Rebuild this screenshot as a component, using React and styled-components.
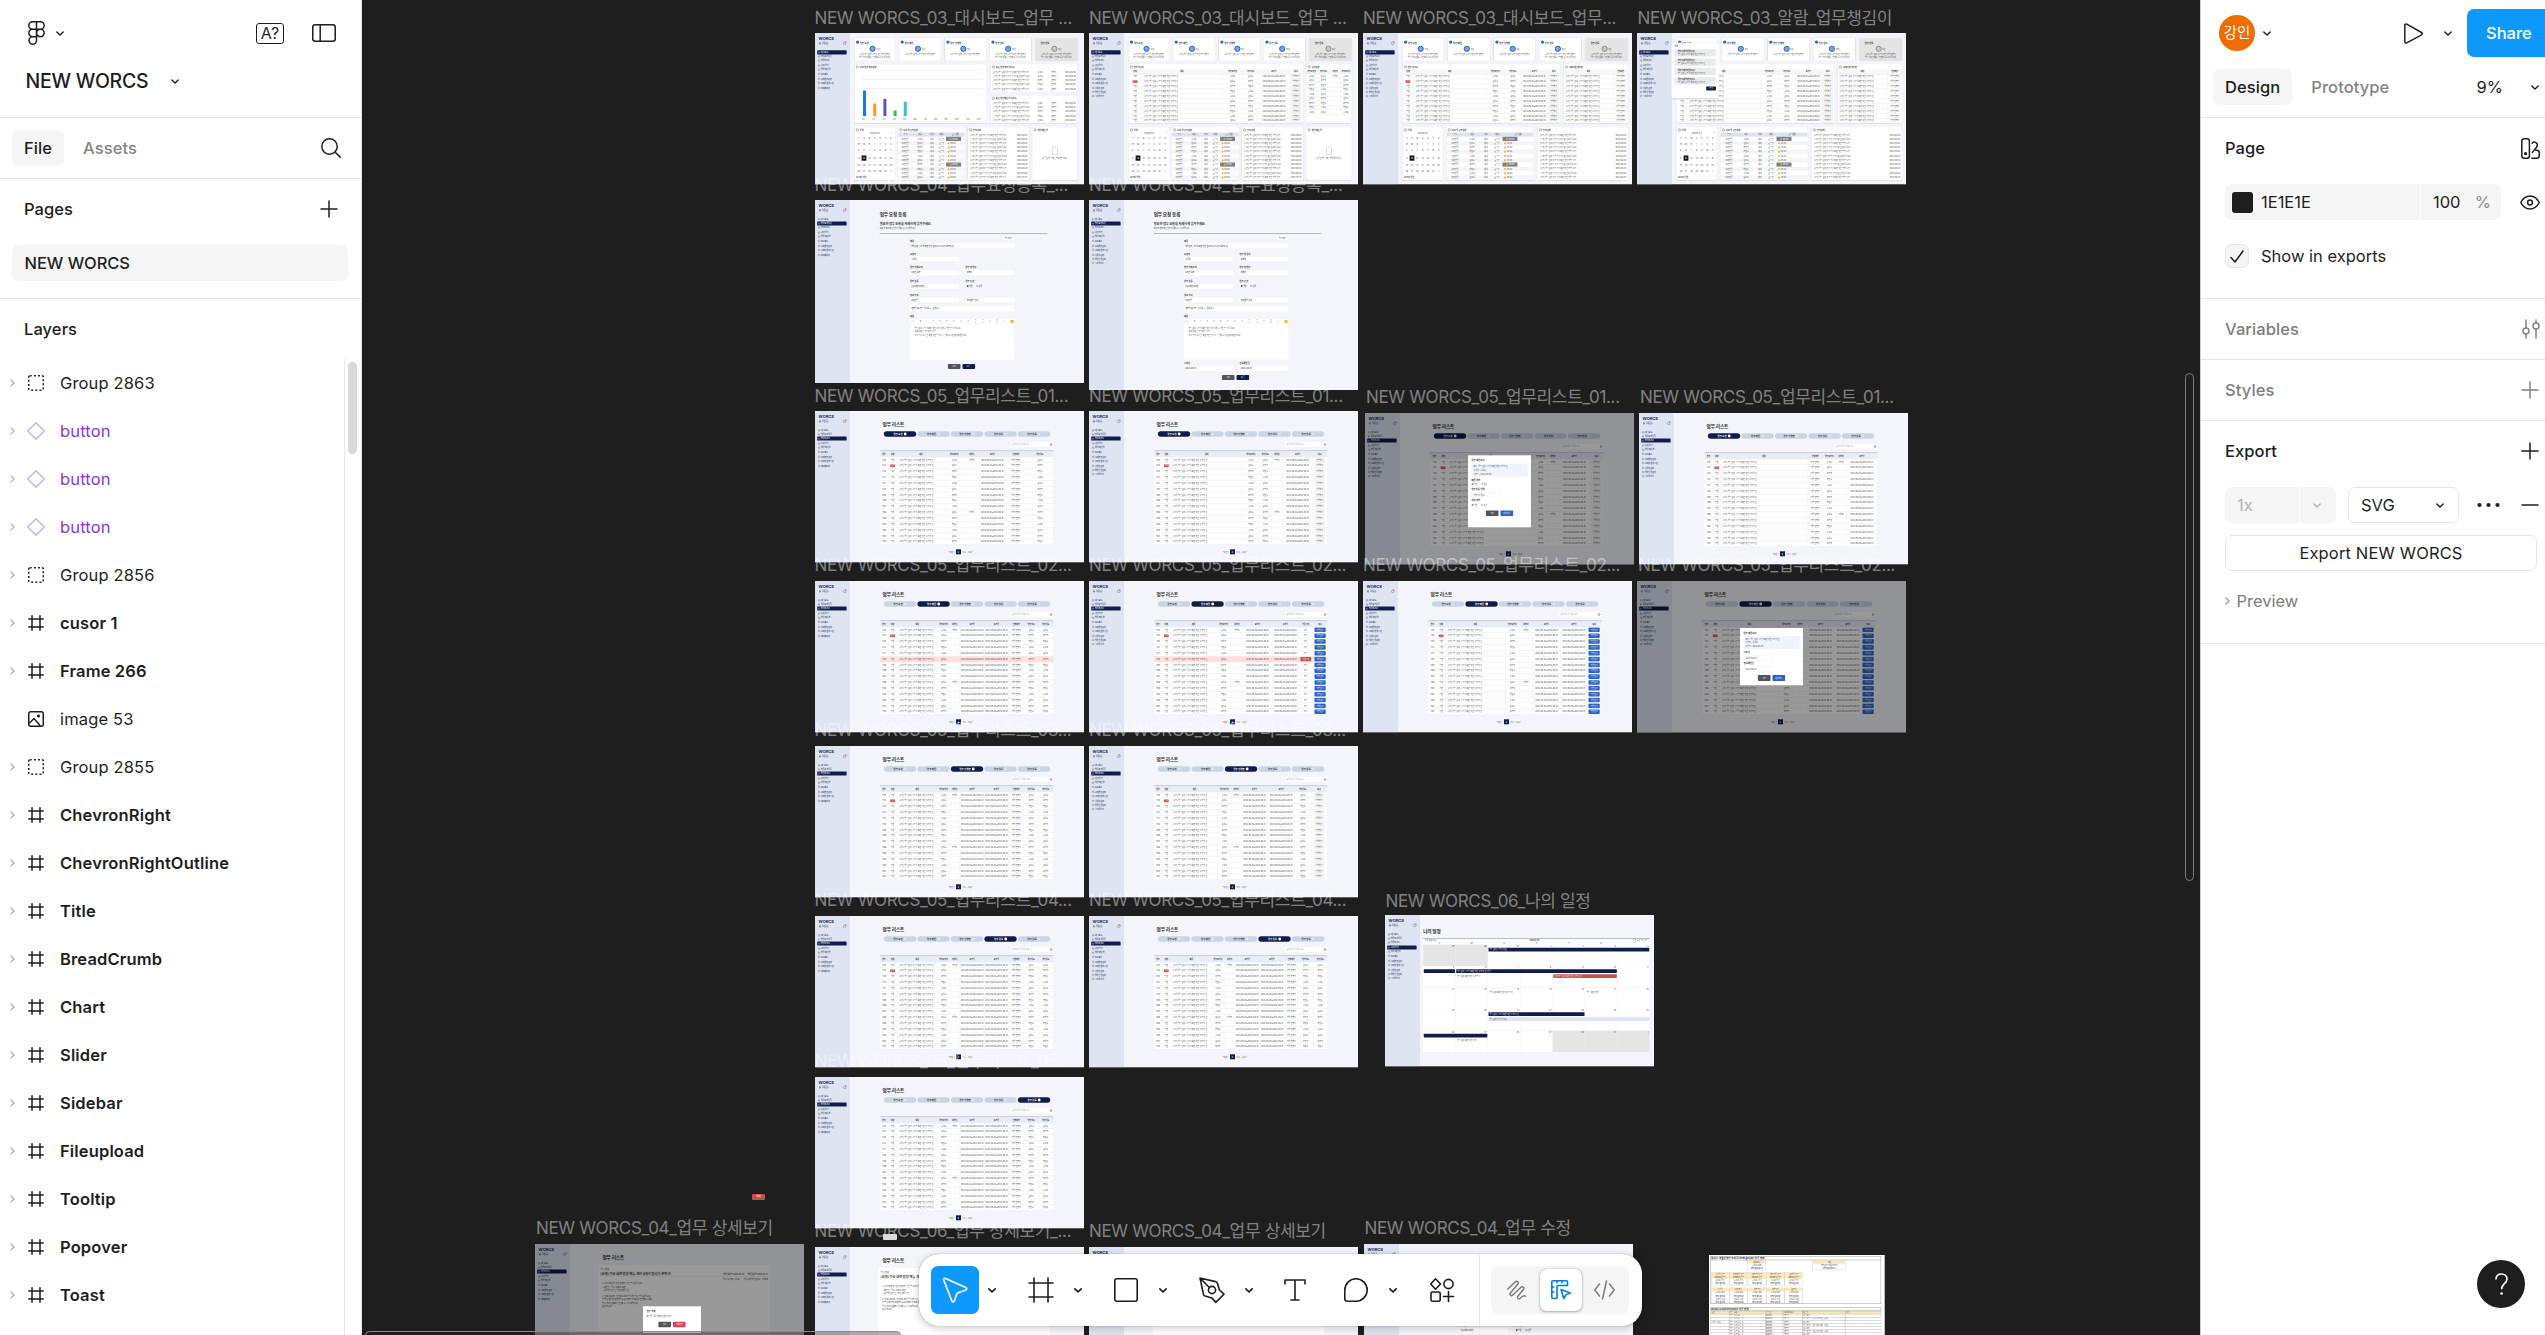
import React from "react";
import styled, { createGlobalStyle, css } from "styled-components";

const GlobalStyle = createGlobalStyle`
  *, *::before, *::after { box-sizing: border-box; }
  html, body { margin: 0; padding: 0; overflow: hidden; }
  body {
    font-family: Inter, "Noto Sans CJK KR", "Noto Sans", sans-serif;
    font-size: 16.5px;
    color: #1e1e1e;
    background: #1e1e1e;
  }
`;

const ink = "#1e1e1e";
const muted = "#838383";
const line = "#e6e6e6";
const navy = "#101c4c";
const blue = "#2a63c6";
const red = "#cf4a4a";

/* ---------------------------------------------------------------- shell */

const Shell = styled.div`
  display: grid;
  grid-template-columns: 362px 1838px 345px;
  width: 2545px;
  height: 1335px;
  overflow: hidden;
`;

const Svg = styled.svg`
  display: block;
  flex: none;
  overflow: visible;
  fill: none;
  stroke: ${(p) => p.$c || ink};
  stroke-width: ${(p) => p.$sw || 1.5};
  stroke-linecap: round;
  stroke-linejoin: round;
`;

const Icon = ({ w, h, c, sw, children, className }) => (
  <Svg className={className} width={w} height={h} viewBox={`0 0 ${w} ${h}`} $c={c} $sw={sw}>
    {children}
  </Svg>
);

const ChevronDown = ({ c, sw }) => (
  <Icon w={8} h={5} c={c} sw={sw || 1.4}><path d="M.8 .9 4 3.9 7.2 .9" /></Icon>
);
const ChevronRight = ({ c }) => (
  <Icon w={5} h={8} c={c} sw={1.4}><path d="M.9 .9 4.1 4 .9 7.1" /></Icon>
);
const Plus = ({ c, s = 16 }) => (
  <Icon w={s} h={16} c={c}><path d={`M0 8h${s}M${s / 2} 0v16`} /></Icon>
);

/* ----------------------------------------------------------- left panel */

const LeftPanel = styled.aside`
  display: flex;
  flex-direction: column;
  width: 362px;
  height: 1335px;
  background: #fff;
  border-right: 1px solid #e0e0e0;
`;

const FileHeader = styled.header`
  height: 118px;
  border-bottom: 1px solid ${line};
`;

const TopRow = styled.div`
  display: flex;
  align-items: center;
  height: 66px;
  padding: 0 25px 0 28px;
`;

const Spacer = styled.div`
  flex: 1;
`;

const Gap = styled.div`
  flex: none;
  width: ${(p) => p.$w}px;
`;

const Badge = styled.div`
  width: 28px;
  height: 21px;
  margin-right: 28px;
  border: 1.5px solid ${ink};
  border-radius: 3px;
  font-size: 16px;
  line-height: 18px;
  text-align: center;
  letter-spacing: 0.2px;
`;

const FileName = styled.div`
  display: flex;
  align-items: center;
  height: 30px;
  padding-left: 25.5px;
  gap: 22.5px;
  font-size: 19.5px;
  font-weight: 500;
  letter-spacing: -0.25px;
`;

const TabBar = styled.nav`
  display: flex;
  align-items: center;
  height: ${(p) => p.$h}px;
  padding: ${(p) => p.$pad};
  border-bottom: 1px solid ${line};
`;

const Tab = styled.div`
  height: 36px;
  padding: 0 12px;
  border-radius: 7px;
  line-height: 36px;
  font-weight: ${(p) => (p.$on ? 550 : 450)};
  letter-spacing: 0.08px;
  color: ${(p) => (p.$on ? ink : muted)};
  background: ${(p) => (p.$on ? "#f5f5f5" : "transparent")};
  margin-right: 7px;
`;

const PagesSection = styled.section`
  height: 120px;
  border-bottom: 1px solid ${line};
  padding: 0 12px;
`;

const SectionHead = styled.div`
  display: flex;
  align-items: center;
  justify-content: space-between;
  height: ${(p) => p.$h || 60}px;
  padding: ${(p) => p.$pad || "0 12px"};
  font-weight: 550;
  letter-spacing: 0.08px;
  color: ${(p) => (p.$dim ? "#7d7d7d" : ink)};
`;

const PageItem = styled.div`
  width: 336px;
  height: 36px;
  margin-top: 6px;
  padding: 0 12.5px;
  line-height: 36px;
  font-weight: 500;
  letter-spacing: -0.05px;
  border-radius: 7px;
  background: #f5f5f5;
`;

const LayersBody = styled.div`
  display: flex;
  flex: 1;
`;

const LayerList = styled.ul`
  width: 345px;
  margin: 0;
  padding: 0;
  list-style: none;
  border-right: 1px solid ${line};
`;

const ScrollThumb = styled.div`
  width: 9px;
  height: 92px;
  margin: 3px 0 0 3px;
  border-radius: 4.5px;
  background: #d9d9d9;
`;

const LayerRow = styled.li`
  display: grid;
  grid-template-columns: 17px 33.5px 1fr;
  align-items: center;
  height: 48px;
  padding-left: 9.5px;
  white-space: nowrap;
  letter-spacing: 0.15px;
  font-weight: ${(p) => (p.$kind === "frame" ? 600 : 400)};
  color: ${(p) => (p.$kind === "component" ? "#8638e5" : ink)};
`;

const layerIcons = {
  group: <Icon w={16} h={16}><rect x=".75" y=".75" width="14.5" height="14.5" strokeDasharray="2 2.1" rx="1" strokeLinecap="butt" /></Icon>,
  component: <Icon w={18} h={18} c="#c9b1ea"><path d="M9 .8 17.2 9 9 17.2.8 9z" /></Icon>,
  frame: <Icon w={16} h={16}><path d="M4 .8v14.4M12 .8v14.4M.8 4h14.4M.8 12h14.4" /></Icon>,
  image: <Icon w={16} h={16}><rect x=".75" y=".75" width="14.5" height="14.5" rx="2" /><path d="m1.5 12 4.5-4.5 6 7" /><circle cx="10.5" cy="5" r=".8" fill={ink} /></Icon>,
};

const LayerGlyph = styled.span`
  display: flex;
  justify-content: center;
  width: 18px;
`;

const layers = [
  ["group", "Group 2863"], ["component", "button"], ["component", "button"], ["component", "button"],
  ["group", "Group 2856"], ["frame", "cusor 1"], ["frame", "Frame 266"], ["image", "image 53"],
  ["group", "Group 2855"], ["frame", "ChevronRight"], ["frame", "ChevronRightOutline"], ["frame", "Title"],
  ["frame", "BreadCrumb"], ["frame", "Chart"], ["frame", "Slider"], ["frame", "Sidebar"],
  ["frame", "Fileupload"], ["frame", "Tooltip"], ["frame", "Popover"], ["frame", "Toast"],
];

const FigmaLogo = () => (
  <Icon w={17} h={24}>
    <path d="M8.5.75H4.6a3.75 3.75 0 0 0 0 7.5h3.9zM8.5.75h3.9a3.75 3.75 0 0 1 0 7.5H8.5zM8.5 8.25H4.6a3.75 3.75 0 0 0 0 7.5h3.9zM12.4 8.25a3.75 3.75 0 1 1 0 7.5 3.75 3.75 0 0 1 0-7.5zM8.5 15.75H4.6a3.75 3.75 0 1 0 3.9 3.75zM8.5 8.25v7.5" />
  </Icon>
);

const Left = () => (
  <LeftPanel>
    <FileHeader>
      <TopRow>
        <FigmaLogo />
        <Gap $w={11} />
        <ChevronDown />
        <Spacer />
        <Badge>A?</Badge>
        <Icon w={24} h={18}><rect x=".75" y=".75" width="22.5" height="16.5" rx="2.5" /><path d="M8.2 1v16" /></Icon>
      </TopRow>
      <FileName>NEW WORCS<ChevronDown /></FileName>
    </FileHeader>
    <TabBar $h={61} $pad="0 20px 0 12px">
      <Tab $on>File</Tab>
      <Tab>Assets</Tab>
      <Spacer />
      <Icon w={20} h={20}><circle cx="8.5" cy="8.5" r="7.7" /><path d="m14 14 5.3 5.3" /></Icon>
    </TabBar>
    <PagesSection>
      <SectionHead>Pages<Plus /></SectionHead>
      <PageItem>NEW WORCS</PageItem>
    </PagesSection>
    <SectionHead $pad="0 24px">Layers</SectionHead>
    <LayersBody>
      <LayerList>
        {layers.map(([kind, name], i) => (
          <LayerRow key={i} $kind={kind}>
            <span>{kind !== "image" && <ChevronRight c={kind === "component" ? "#c9b1ea" : "#b3b3b3"} />}</span>
            <LayerGlyph>{layerIcons[kind]}</LayerGlyph>
            <span>{name}</span>
          </LayerRow>
        ))}
      </LayerList>
      <ScrollThumb />
    </LayersBody>
  </LeftPanel>
);

/* ---------------------------------------------------------- right panel */

const RightPanel = styled.aside`
  position: relative;
  width: 345px;
  height: 1335px;
  overflow: hidden;
  background: #fff;
  border-left: 1px solid #d0d0d0;
`;

const UserRow = styled.div`
  display: flex;
  align-items: center;
  height: 66px;
  padding-left: 18px;
`;

const Avatar = styled.div`
  flex: none;
  width: 36px;
  height: 36px;
  margin-right: 8px;
  border-radius: 50%;
  background: #ef6c00;
  color: #fff;
  font-size: 14.5px;
  line-height: 35px;
  text-align: center;
  white-space: nowrap;
`;

const ShareButton = styled.div`
  flex: none;
  width: 90px;
  height: 48px;
  margin-left: 15px;
  padding-left: 19px;
  border-radius: 7px;
  background: #0d99ff;
  color: #fff;
  font-weight: 550;
  line-height: 48px;
`;

const RSection = styled.section`
  height: ${(p) => p.$h}px;
  border-bottom: 1px solid ${line};
`;

const RHead = styled(SectionHead)`
  padding: 0 ${(p) => p.$pr || 6}px 0 24px;
`;

const Line = styled.div`
  display: flex;
  align-items: center;
  height: ${(p) => p.$h || 36}px;
  margin-top: ${(p) => p.$mt || 0}px;
  padding-left: 24px;
`;

const ColorField = styled.div`
  display: flex;
  align-items: center;
  width: 195px;
  height: 36px;
  padding-left: 7px;
  border-radius: 7px 0 0 7px;
  background: #f5f5f5;
  gap: 8px;
`;

const Swatch = styled.div`
  width: 21px;
  height: 21px;
  border-radius: 3px;
  background: ${ink};
`;

const AlphaField = styled.div`
  display: flex;
  justify-content: space-between;
  width: 80px;
  height: 36px;
  margin: 0 19px 0 1px;
  padding: 0 10px 0 12px;
  line-height: 36px;
  border-radius: 0 7px 7px 0;
  background: #f5f5f5;
`;

const Dim = styled.span`
  color: ${(p) => p.$c || "#8c8c8c"};
`;

const Check = styled.div`
  display: flex;
  align-items: center;
  justify-content: center;
  width: 24px;
  height: 24px;
  margin-right: 12px;
  border: 1px solid ${line};
  border-radius: 7px;
  background: #f5f5f5;
`;

const ScaleField = styled.div`
  display: flex;
  align-items: center;
  width: ${(p) => p.$w}px;
  height: 36px;
  padding-left: ${(p) => p.$pl}px;
  margin-right: ${(p) => p.$mr}px;
  border-radius: ${(p) => (p.$end ? "0 7px 7px 0" : "7px 0 0 7px")};
  background: #f5f5f5;
  color: #b3b3b3;
`;

const SelectBox = styled.div`
  display: flex;
  align-items: center;
  justify-content: space-between;
  width: 111px;
  height: 36px;
  padding: 0 14px 0 12px;
  border: 1px solid ${line};
  border-radius: 7px;
  margin-right: 18px;
`;

const WideButton = styled.div`
  width: 312px;
  height: 36px;
  border: 1px solid ${line};
  border-radius: 7px;
  line-height: 35px;
  text-align: center;
  font-weight: 400;
  letter-spacing: 0.15px;
`;

const HelpButton = styled.div`
  position: absolute;
  left: 276px;
  top: 1260px;
  display: flex;
  align-items: center;
  justify-content: center;
  width: 48px;
  height: 48px;
  border-radius: 50%;
  background: ${ink};
`;

const Right = () => (
  <RightPanel>
    <UserRow>
      <Avatar>강인</Avatar>
      <ChevronDown />
      <Gap $w={133} />
      <Icon w={19} h={21}><path d="M.8 2.2v16.6c0 1.1 1 1.6 1.9 1.1l14.9-8c.9-.5.9-1.9 0-2.4L2.700 1.200C1.800.7.8 1.200.8 2.200z" /></Icon>
      <Gap $w={21} />
      <ChevronDown />
      <ShareButton>Share</ShareButton>
    </UserRow>
    <TabBar $h={52} $pad="0 6px 9px 12px">
      <Tab $on>Design</Tab>
      <Tab>Prototype</Tab>
      <Spacer />
      <span>9%</span>
      <Gap $w={28} />
      <ChevronDown />
    </TabBar>
    <RSection $h={181}>
      <RHead $pr={5}>Page
        <Icon w={19} h={21}>
          <rect x=".8" y=".8" width="7.6" height="19.4" rx="2.5" />
          <circle cx="4.6" cy="15.6" r=".9" fill={ink} />
          <path d="M11.2 5.2c1.5-1.8 4.2-1.2 5 .6.6 1.500-.2 3-1.600 4.600l-3.200 4M14.800 12.200h1c1.600 0 2.500 1.200 2.500 2.600v2.800c0 1.600-1 2.600-2.500 2.600h-5" />
        </Icon>
      </RHead>
      <Line $mt={6}>
        <ColorField><Swatch />1E1E1E</ColorField>
        <AlphaField>100<Dim>%</Dim></AlphaField>
        <Icon w={20} h={15}><path d="M.8 7.500C3 3.200 6.200 1 10 1s7 2.200 9.200 6.500C17 11.800 13.800 14 10 14S3 11.800.8 7.500z" /><circle cx="10" cy="7.500" r="2.400" /></Icon>
      </Line>
      <Line $mt={18}>
        <Check><Icon w={14} h={13}><path d="m1 7.500 4 4.500L13 1" /></Icon></Check>
        Show in exports
      </Line>
    </RSection>
    <RSection $h={61}>
      <RHead $dim>Variables
        <Icon w={17} h={18} c={muted}><path d="M4 0v8M4 14v4M14 0v3M14 9v9" /><circle cx="4" cy="11" r="3" /><circle cx="14" cy="6" r="3" /></Icon>
      </RHead>
    </RSection>
    <RSection $h={61}>
      <RHead $dim $pr={7}>Styles<Plus c={muted} /></RHead>
    </RSection>
    <RSection $h={223}>
      <RHead $pr={7}>Export<Plus /></RHead>
      <Line $mt={6}>
        <ScaleField $w={74} $pl={12} $mr={1}>1x</ScaleField>
        <ScaleField $w={36} $pl={13} $mr={12} $end><ChevronDown c="#b3b3b3" /></ScaleField>
        <SelectBox>SVG<ChevronDown /></SelectBox>
        <Icon w={24} h={6}><g fill={ink} stroke="none"><circle cx="2.500" cy="3" r="2.100" /><circle cx="11.500" cy="3" r="2.100" /><circle cx="20.500" cy="3" r="2.100" /></g></Icon>
        <Gap $w={21} />
        <Icon w={16} h={2}><path d="M0 1h16" /></Icon>
      </Line>
      <Line $mt={12}><WideButton>Export NEW WORCS</WideButton></Line>
      <Line $mt={12}><ChevronRight c="#a0a0a0" /><Gap $w={6.500} /><Dim $c="#7d7d7d">Preview</Dim></Line>
    </RSection>
    <HelpButton>
      <Icon w={13} h={22} c="#fff" sw={1.7}><path d="M1 5.800C1.200 2.800 3.400 1 6.500 1S12 3 12 5.900c0 4.600-5.300 4.700-5.300 9.600" /><circle cx="6.600" cy="20.500" r=".5" fill="#fff" /></Icon>
    </HelpButton>
  </RightPanel>
);

/* --------------------------------------------------------------- canvas */

const Canvas = styled.main`
  position: relative;
  overflow: hidden;
  background: ${ink};
`;

const NodeLabel = styled.div`
  position: absolute;
  z-index: 2;
  left: ${(p) => p.$x - 362}px;
  top: ${(p) => p.$y - 17}px;
  height: 22px;
  line-height: 22px;
  font-size: 17px;
  letter-spacing: -0.34px;
  white-space: nowrap;
  color: rgba(255, 255, 255, 0.45);
`;

/* Artboards are laid out ten times larger than they appear at this zoom. */
const Board = styled.article`
  position: absolute;
  z-index: 1;
  left: ${(p) => p.$x - 362}px;
  top: ${(p) => p.$y}px;
  display: flex;
  width: 2690px;
  height: ${(p) => p.$h || 1513}px;
  overflow: hidden;
  transform: scale(0.1);
  transform-origin: 0 0;
  background: #f4f5fa;
  color: #333;
  font-size: 19px;
  line-height: 1;
  white-space: nowrap;
`;

const Dimmer = styled.div`
  position: absolute;
  inset: 0;
  background: rgba(0, 0, 0, 0.4);
`;

const Side = styled.div`
  flex: none;
  width: 350px;
  padding: 34px 22px;
  background: #dfe4f2;
  color: #2b3763;
`;

const Brand = styled.div`
  padding-left: 14px;
  font-size: 41px;
  font-weight: 700;
  letter-spacing: -1px;
  color: #1f2b58;
`;

const Who = styled.div`
  display: flex;
  justify-content: space-between;
  align-items: center;
  height: 58px;
  margin-bottom: 40px;
  padding: 0 18px 0 16px;
  font-size: 24px;
  font-weight: 500;
`;

const Bell = styled.i`
  width: 28px;
  height: 28px;
  border: 5px solid #6d7aa5;
  border-radius: 10px;
  box-shadow: 9px -10px 0 -5px #f04a55;
`;

const MenuGroup = styled.div`
  margin-bottom: 9px;
`;

const MenuItem = styled.div`
  display: flex;
  align-items: center;
  height: 41px;
  width: 294px;
  padding-left: 10px;
  gap: 9px;
  font-size: 20px;
  font-weight: 500;
  ${(p) => p.$on && css`background: ${navy}; color: #fff; border-radius: 6px;`}
`;

const MenuDot = styled.i`
  width: 18px;
  height: 18px;
  border: 4px solid currentColor;
  border-radius: 4px;
  opacity: 0.7;
`;

const userMenu = [["대시보드", "업무요청등록", "업무리스트"], ["나의 일정", "업무 매뉴얼", "프로젝트"], ["고객센터관리", "고객지원게시판"], ["마이페이지"]];
const adminMenu = [["대시보드", "업무요청등록", "업무리스트"], ["나의 일정", "업무 매뉴얼", "프로젝트"], ["고객센터관리", "고객지원게시판"], ["사용자관리", "업무분류관리", "시스템설정"]];

const SideNav = ({ active, admin }) => (
  <Side>
    <Brand>WORCS</Brand>
    <Who><span>홍 길동님</span><Bell /></Who>
    {(admin ? adminMenu : userMenu).map((g, i) => (
      <MenuGroup key={i}>
        {g.map((t) => <MenuItem key={t} $on={t === active}><MenuDot />{t}</MenuItem>)}
      </MenuGroup>
    ))}
  </Side>
);

const BTitle = styled.h2`
  margin: 0;
  padding-left: ${(p) => p.$pl || 0}px;
  font-size: 47px;
  line-height: 60px;
  font-weight: 700;
  letter-spacing: -2px;
  color: #2b2b2b;
`;

const Button = styled.span`
  display: inline-flex;
  align-items: center;
  justify-content: center;
  width: ${(p) => p.$w || 126}px;
  height: ${(p) => p.$h || 50}px;
  margin-left: ${(p) => (p.$end ? "auto" : 0)};
  border-radius: 8px;
  background: ${(p) => p.$bg};
  color: ${(p) => p.$c || "#fff"};
  border: ${(p) => p.$bd || "0"};
  font-size: 19px;
`;

/* task list */

const ListPage = styled.div`
  width: 1730px;
  margin-left: 303px;
  padding-top: 100px;
`;

const Pills = styled.div`
  display: flex;
  gap: 12px;
  margin: 42px 0 54px 36px;
`;

const Pill = styled.div`
  display: flex;
  align-items: center;
  justify-content: center;
  gap: 12px;
  width: 323px;
  height: 55px;
  border-radius: 28px;
  background: ${(p) => (p.$on ? navy : "#c9d5e4")};
  color: ${(p) => (p.$on ? "#fff" : "#333")};
  font-size: 23px;
  font-weight: 600;
  i { width: 28px; height: 28px; border-radius: 14px; background: ${(p) => (p.$on ? "#fff" : "#dde5ee")}; }
`;

const Search = styled.div`
  display: flex;
  align-items: center;
  justify-content: space-between;
  width: 420px;
  height: 47px;
  margin: 0 0 38px auto;
  padding: 0 10px;
  background: #fff;
  color: #9aa;
  i { width: 24px; height: 24px; border: 5px solid #555; border-radius: 12px; }
`;

const Table = styled.div`
  border-top: ${(p) => (p.$plain ? "0" : "7px solid #8a94b3")};
  background: #fff;
`;

const TRow = styled.div`
  display: grid;
  grid-template-columns: ${(p) => p.$cols};
  height: ${(p) => p.$h || 58.5}px;
  border-bottom: 5px solid #e9ebf0;
  background: ${(p) => p.$bg || "transparent"};
  font-weight: ${(p) => (p.$head ? 600 : 400)};
`;

const TCell = styled.div`
  display: flex;
  align-items: center;
  justify-content: ${(p) => (p.$left ? "flex-start" : "center")};
  padding-left: ${(p) => (p.$left ? 18 : 0)}px;
  border-right: 4px solid #eceef3;
  overflow: hidden;
`;

const Pager = styled.div`
  display: flex;
  align-items: center;
  gap: 16px;
  margin: 44px 0 0 680px;
  color: #444;
  b { display: grid; place-items: center; width: 50px; height: 50px; background: ${navy}; color: #fff; }
`;

const names = ["홍길동", "김철수", "이영희", "박민수"];

const cellText = {
  no: (i) => `${115 - i}`.padStart(4, "1"),
  st: (i) => (i === 1 ? <Button $bg={red} $w={48} $h={30}>긴급</Button> : "일반"),
  title: () => "[요청] 업무관리 시스템 화면 개선 요청의 건",
  who: (i) => names[i % 4],
  wk: (i) => (i % 9 === 0 ? "작업자" : "-"),
  date: () => "2024-05-01~2024-05-31",
  prog: () => "작업 진행중",
  chk: (i) => names[(i + 1) % 4],
  line: () => <Button $bg="#fff" $bd="3px solid #ccc" $c="#333" $w={100} $h={38}>작업하기</Button>,
  late: (i) => (i === 5 ? <Button $bg={red} $w={108} $h={44}>기한초과</Button> : <Button $bg="#fff" $bd="3px solid #eee" $c="#333" $w={104} $h={38}>5일</Button>),
  blue: () => <Button $bg={blue} $w={112} $h={46}>작업완료</Button>,
};
const headText = { no: "번호", st: "상태", title: "제목", who: "업무요청자", wk: "작업자", date: "요청일", prog: "진행여부", chk: "업무검토", line: "비고", late: "남은기한", blue: "비고" };

const sets = {
  u1: [["no", 80], ["st", 90], ["title", 480], ["who", 183], ["wk", 163], ["date", 251], ["prog", 223], ["chk", 260]],
  a1: [["no", 76], ["st", 91], ["title", 716], ["who", 164], ["chk", 123], ["wk", 110], ["date", 300], ["line", 145]],
  m1: [["no", 90], ["st", 80], ["title", 865], ["who", 135], ["wk", 110], ["date", 316], ["line", 130]],
  b1: [["no", 90], ["st", 74], ["title", 866], ["prog", 156], ["who", 128], ["wk", 106], ["date", 305]],
  u2: [["no", 80], ["st", 90], ["title", 404], ["who", 120], ["wk", 102], ["date", 244], ["date", 243], ["prog", 153], ["chk", 144], ["chk", 147]],
  a2: [["no", 76], ["st", 91], ["title", 451], ["who", 149], ["wk", 116], ["date", 295], ["date", 262], ["late", 145], ["blue", 140]],
  b2: [["no", 86], ["st", 89], ["title", 595], ["who", 140], ["wk", 130], ["date", 280], ["date", 266], ["blue", 139]],
  a3: [["no", 76], ["st", 91], ["title", 469], ["who", 131], ["wk", 103], ["date", 260], ["date", 270], ["chk", 164], ["line", 160]],
  a4: [["no", 76], ["st", 91], ["title", 407], ["who", 124], ["wk", 109], ["date", 240], ["date", 258], ["prog", 129], ["chk", 154], ["chk", 138]],
};

const Grid = ({ set, pink, calm, rows = 15, plain, h }) => {
  const cols = sets[set] || set;
  const t = cols.map((c) => `${c[1]}fr`).join(" ");
  return (
    <Table $plain={plain}>
      <TRow $cols={t} $bg={plain ? "#f6f7fa" : "#e9edf6"} $head $h={h}>
        {cols.map((c, j) => <TCell key={j}>{headText[c[0]]}</TCell>)}
      </TRow>
      {Array.from({ length: rows }, (_, i) => (
        <TRow key={i} $cols={t} $h={h} $bg={pink && i === 5 ? "#ffdede" : "transparent"}>
          {cols.map((c, j) => <TCell key={j} $left={c[0] === "title"}>{cellText[c[0]](calm && c[0] === "st" ? 0 : i)}</TCell>)}
        </TRow>
      ))}
    </Table>
  );
};

const Dialog = styled.div`
  position: absolute;
  left: ${(p) => p.$x}px;
  top: ${(p) => p.$y}px;
  display: flex;
  flex-direction: column;
  gap: ${(p) => p.$gap || 28}px;
  width: ${(p) => p.$w}px;
  height: ${(p) => p.$h}px;
  padding: 38px 34px;
  background: #fff;
  b { font-size: 23px; }
`;

const InfoBox = styled.div`
  display: flex;
  flex-direction: column;
  justify-content: space-around;
  height: 130px;
  padding: 10px 22px;
  background: #eff4fc;
`;

const MiniInput = styled.div`
  display: flex;
  align-items: center;
  width: ${(p) => p.$w || 280}px;
  height: 48px;
  padding-left: 20px;
  background: #fff;
  border: 3px solid #e5e7ec;
`;

const Buttons = styled.div`
  display: flex;
  justify-content: center;
  gap: 20px;
  margin-top: ${(p) => p.$mt || 0}px;
`;

const tabNames = ["업무 요청", "업무 배정", "업무 진행중", "업무 검토", "업무 완료"];

const ListBoard = ({ x, y, set, tab, admin, pink, calm, modal }) => (
  <Board $x={x} $y={y}>
    <SideNav active="업무리스트" admin={admin} />
    <ListPage>
      <BTitle $pl={23}>업무 리스트</BTitle>
      <Pills>{tabNames.map((t, i) => <Pill key={t} $on={i === tab}>{t}<i /></Pill>)}</Pills>
      <Search>검색어를 입력해주세요.<i /></Search>
      <Grid set={set} pink={pink} calm={calm} />
      <Pager>&lt;이전 1 <b>2</b> 3 4 … 다음&gt;</Pager>
    </ListPage>
    {modal && <Dimmer />}
    {modal === "review" && (
      <Dialog $x={1030} $y={423} $w={630} $h={720} $gap={23}>
        <b>업무 배정하기</b>
        <InfoBox><span>제목 : 업무관리 시스템 화면 개선 요청의 건</span><span>요청자 : 홍길동</span><span>요청일 : 2024-05-01</span></InfoBox>
        <b>배정 여부</b><span>◉ 승인　　○ 반려</span>
        <b>업무분류 선택</b><MiniInput>개발요청 접수</MiniInput>
        <b>처리 여부</b><span>◉ 일반　　○ 긴급</span>
        <Buttons $mt={22}><Button $bg="#51545c" $h={56}>취소</Button><Button $bg={blue} $h={56}>배정하기</Button></Buttons>
      </Dialog>
    )}
    {modal === "assign" && (
      <Dialog $x={1030} $y={470} $w={630} $h={573} $gap={20}>
        <b>업무 배정하기</b>
        <InfoBox><span>제목 : 업무관리 시스템 화면 개선 요청의 건</span><span>요청자 : 홍길동</span><span>요청일 : 2024-05-01</span></InfoBox>
        <b>시작일</b><MiniInput>2024-05-01</MiniInput>
        <b>종료예정일</b><MiniInput>2024-05-31</MiniInput>
        <Buttons $mt={18}><Button $bg="#51545c" $h={60}>취소</Button><Button $bg={blue} $h={60}>배정하기</Button></Buttons>
      </Dialog>
    )}
  </Board>
);

/* dashboard */

const Dash = styled.div`
  display: flex;
  flex-direction: column;
  width: ${(p) => p.$w}px;
  margin-left: 46px;
  padding-top: 53px;
`;

const Strip = styled.div`
  display: grid;
  grid-template-columns: ${(p) => p.$cols};
  gap: ${(p) => p.$gap || 40}px;
  height: ${(p) => p.$h}px;
  margin-bottom: ${(p) => p.$mb || 0}px;
`;

const Stat = styled.div`
  display: grid;
  grid-template-columns: 1fr 1fr;
  grid-template-rows: 62px 66px 1fr;
  padding: 20px 14px 6px;
  border-radius: 10px;
  background: ${(p) => (p.$off ? "#e4e4e5" : "#fff")};
  box-shadow: 0 2px 10px rgba(40, 50, 90, 0.12);
  font-size: 20px;
`;

const StatTitle = styled.div`
  display: flex;
  gap: 8px;
  grid-column: 1 / 3;
  font-weight: 600;
  font-size: 22px;
  i { width: 32px; height: 32px; margin-top: 2px; border-radius: 50%; background: ${(p) => (p.$off ? "transparent" : blue)}; }
  span { margin-top: 14px; }
`;

const StatDial = styled.div`
  display: flex;
  align-items: center;
  justify-content: center;
  gap: 8px;
  grid-column: 1 / 3;
  margin-top: -20px;
  i {
    width: 62px; height: 62px; border-radius: 50%;
    border: 10px solid ${(p) => (p.$off ? "#909090" : blue)};
    background: ${(p) => (p.$off ? "#c9c9c9" : "#7ea3e2")};
  }
`;

const StatNote = styled.div`
  grid-column: 1 / 3;
  text-align: center;
  line-height: 25px;
  font-size: 18px;
`;

const Card = styled.div`
  display: flex;
  flex: 1;
  flex-direction: column;
  overflow: hidden;
  border-radius: 8px;
  background: #fff;
  box-shadow: 0 2px 10px rgba(40, 50, 90, 0.1);
`;

const CardHead = styled.div`
  display: flex;
  align-items: center;
  gap: 12px;
  flex: none;
  height: 52px;
  padding-left: 14px;
  font-weight: 600;
  font-size: 21px;
  i { width: 26px; height: 26px; border: 5px solid #777; border-radius: 6px; }
`;

const Stack = styled.div`
  display: flex;
  flex-direction: column;
  gap: 37px;
`;

const TextRows = styled.div`
  display: flex;
  flex: ${(p) => (p.$fixed ? "none" : 1)};
  flex-direction: column;
  justify-content: space-around;
  padding: 2px 18px 8px 22px;
  div { display: flex; justify-content: space-between; }
`;

const Lines = ({ n, extra }) => (
  <TextRows>
    {Array.from({ length: n }, (_, i) => (
      <div key={i}><span>{i % 2 ? "[공지] 업무관리 시스템 정기점검 안내드립니다" : "[요청] 업무관리 프로그램 화면 개선 작업 요청"}</span>
        {extra && <span>{names[i % 4]}</span>}{extra && <span>진행중</span>}<span>2024-05-01</span></div>
    ))}
  </TextRows>
);

const Plot = styled.div`
  display: flex;
  flex: 1;
  align-items: flex-end;
  gap: 72px;
  margin: 10px 40px 0 80px;
  padding-left: 4px;
  background: repeating-linear-gradient(#fff 0 88px, #eceef2 88px 91px);
`;

const Bar = styled.i`
  width: 30px;
  height: ${(p) => p.$h}px;
  background: ${(p) => p.$c};
`;

const Months = styled.div`
  display: flex;
  justify-content: space-between;
  height: 70px;
  padding: 26px 60px 0 76px;
`;

const Cal = styled.div`
  display: grid;
  grid-template-columns: repeat(7, 1fr);
  flex: 1;
  place-items: center;
  padding: 0 14px;
  b { display: grid; place-items: center; width: 48px; height: 52px; background: #111; color: #fff; }
`;

const CalCard = () => (
  <Card>
    <CardHead><i />달력</CardHead>
    <TextRows $fixed><div><span>&lt;</span><span>2024년 5월</span><span>&gt;</span></div></TextRows>
    <Cal>
      {["일", "월", "화", "수", "목", "금", "토"].map((d) => <span key={d}>{d}</span>)}
      {Array.from({ length: 35 }, (_, i) => (i === 15 ? <b key={i}>13</b> : <span key={i}>{((i + 28) % 31) + 1}</span>))}
    </Cal>
    <CardHead>오늘의 일정</CardHead>
  </Card>
);

const WorkTable = styled.div`
  display: grid;
  grid-template-columns: 22fr 22fr 14fr 14fr ${(p) => (p.$wide ? 40 : 28)}fr;
  grid-auto-rows: 1fr;
  flex: 1;
  padding-bottom: 4px;
`;

const WorkCell = styled.div`
  display: flex;
  align-items: center;
  justify-content: center;
  border-right: 3px solid #eceef2;
  background: ${(p) => (p.$head ? "#dbe3f1" : p.$alt ? "#f3f5f9" : "#fff")};
`;

const Sun = styled.span`
  display: flex;
  align-items: center;
  justify-content: center;
  gap: 8px;
  height: 42px;
  width: ${(p) => (p.$on ? 150 : 110)}px;
  margin-right: auto;
  background: ${(p) => (p.$on ? "#7e7f83" : "transparent")};
  color: ${(p) => (p.$on ? "#fff" : "#555")};
  &::before { content: ""; width: 20px; height: 20px; border-radius: 50%; background: #f5b02e; }
`;

const WorkCard = ({ wide }) => (
  <Card>
    <CardHead><i />나의 팀 근무현황</CardHead>
    <WorkTable $wide={wide}>
      {["부서", "이름", "직급", "상태", "근무현황"].map((t) => <WorkCell key={t} $head>{t}</WorkCell>)}
      {Array.from({ length: 10 }, (_, r) => ["디자인팀", names[r % 4], "대리", "근무중", null].map((t, c) => (
        <WorkCell key={r + "-" + c} $alt={r % 2 === 1}>{t || <Sun $on={r === 0 || r === 6}>09:00</Sun>}</WorkCell>
      )))}
    </WorkTable>
  </Card>
);

const Empty = styled.div`
  display: flex;
  flex: 1;
  flex-direction: column;
  align-items: center;
  gap: 30px;
  padding-top: 150px;
  i { width: 56px; height: 70px; border: 5px solid #bbb; border-radius: 4px 18px 4px 4px; }
`;

const stats = [["업무 요청", "12건"], ["업무 배정", "3건"], ["업무 진행중", "5건"], ["업무 검토", "10건"], ["업무 완료", "0건"]];

const StatStrip = ({ cols }) => (
  <Strip $cols={cols || "407fr 418fr 411fr 414fr 425fr"} $gap={42} $h={224} $mb={36}>
    {stats.map(([t, n], i) => {
      const off = i === 4;
      return (
        <Stat key={t} $off={off}>
          <StatTitle $off={off}><i /><span>{t}</span></StatTitle>
          <StatDial $off={off}><i />{n}</StatDial>
          <StatNote>[요청] 업무관리 시스템 개선 작업 진행중<br />{i % 3 === 0 || off ? "업무 처리 현황을 확인해 주시기 바랍니다" : ""}</StatNote>
        </Stat>
      );
    })}
  </Strip>
);

const taskCols = [["st", 130], ["title", 780], ["who", 200], ["chk", 150], ["date", 300], ["line", 130]];
const taskColsWide = [["st", 110], ["title", 730], ["who", 180], ["chk", 170], ["date", 260], ["line", 130]];
const leaveCols = [["who", 100], ["chk", 120], ["wk", 100], ["who", 100]];
const noticeCols = [["title", 500], ["prog", 140]];

const Popup = styled.div`
  position: absolute;
  left: 345px;
  top: 97px;
  display: flex;
  flex-direction: column;
  gap: 20px;
  width: 475px;
  height: 556px;
  padding: 26px 30px;
  background: #fff;
  box-shadow: 0 4px 14px rgba(0, 0, 0, 0.25);
  > span { margin-left: auto; }
`;

const PopupItem = styled.div`
  display: flex;
  flex-direction: column;
  justify-content: center;
  gap: 10px;
  height: 73px;
  padding-left: 34px;
  background: #eaebee;
  font-size: 18px;
`;

const DashBoard = ({ x, kind }) => {
  const w = kind > 2 ? 2254 : 2229;
  return (
    <Board $x={x} $y={33.3}>
      <SideNav active="대시보드" admin={kind > 1} />
      <Dash $w={w}>
        <StatStrip />
        {kind === 1 && (
          <Strip $cols="1320fr 869fr" $h={587} $mb={43}>
            <Card>
              <CardHead><i />나의 업무 처리현황</CardHead>
              <Plot>
                <Bar $h={255} $c="#1677ee" /><Bar $h={125} $c="#f59d1c" /><Bar $h={172} $c="#5552c8" />
                <Bar $h={55} $c="#2fbf55" /><Bar $h={142} $c="#2cc9bd" />
              </Plot>
              <Months>{Array.from({ length: 12 }, (_, i) => <span key={i}>{i + 1}월</span>)}</Months>
            </Card>
            <Stack>
              <Card><CardHead><i />최근 업무 요청 리스트</CardHead><Lines n={5} extra /></Card>
              <Card><CardHead><i />최근 업무 매뉴얼 리스트</CardHead><Lines n={5} extra /></Card>
            </Stack>
          </Strip>
        )}
        {kind === 2 && (
          <Strip $cols="1741fr 450fr" $gap={35} $h={587} $mb={43}>
            <Card><CardHead><i />업무 리스트</CardHead><Grid set={taskCols} rows={10} plain h={49} /></Card>
            <Card><CardHead><i />휴가현황</CardHead><Grid set={leaveCols} rows={9} plain h={45} /></Card>
          </Strip>
        )}
        {kind > 2 && (
          <Strip $cols="1579fr 643fr" $gap={32} $h={587} $mb={43}>
            <Card><CardHead><i />업무 리스트</CardHead><Grid set={taskColsWide} rows={10} plain h={49} /></Card>
            <Card><CardHead><i />고객지원 게시판</CardHead><Grid set={noticeCols} rows={10} plain h={49} /></Card>
          </Strip>
        )}
        <Strip $cols={kind > 2 ? "400fr 871fr 904fr" : "404fr 668fr 615fr 451fr"} $gap={kind > 2 ? 40 : 31} $h={527}>
          <CalCard />
          <WorkCard wide={kind > 2} />
          <Card><CardHead><i />공지사항</CardHead><Lines n={11} /></Card>
          {kind < 3 && <Card><CardHead><i />업무 매뉴얼</CardHead><Empty><i />등록된 업무 매뉴얼이 없습니다.</Empty></Card>}
        </Strip>
      </Dash>
      {kind === 4 && (
        <Popup>
          <b>알림</b>
          {[0, 1, 2, 3].map((i) => <PopupItem key={i}><b>업무가 배정되었습니다</b>업무관리 시스템 화면 개선 요청의 건</PopupItem>)}
          <span><Button $bg={navy} $w={98} $h={40}>닫기</Button></span>
        </Popup>
      )}
    </Board>
  );
};

/* request form */

const FormPage = styled.div`
  width: 1676px;
  margin-left: 297px;
  padding-top: 112px;
`;

const Lead = styled.div`
  margin-top: 46px;
  padding-bottom: 28px;
  border-bottom: 6px solid #8c8f9c;
  line-height: 42px;
  font-size: 20px;
  b { display: block; font-size: 32px; letter-spacing: -1px; color: #2b2b2b; }
`;

const FormGrid = styled.div`
  display: grid;
  grid-template-columns: 1fr 1fr;
  column-gap: 68px;
  width: 1043px;
  margin: 24px 0 0 303px;
`;

const Field = styled.div`
  grid-column: ${(p) => (p.$full ? "1 / 3" : "auto")};
  margin-bottom: ${(p) => (p.$mb === undefined ? 42 : p.$mb)}px;
  > b { display: block; height: 43px; line-height: 32px; font-size: 22px; }
`;

const Input = styled.div`
  display: flex;
  align-items: center;
  height: ${(p) => p.$h || 47}px;
  padding-left: 12px;
  gap: 18px;
  background: ${(p) => (p.$bare ? "transparent" : "#fff")};
  font-weight: 500;
`;

const Tools = styled.div`
  display: flex;
  align-items: center;
  justify-content: space-between;
  height: 50px;
  padding: 0 8px;
  background: #fff;
  border-bottom: 4px solid #eceef2;
  color: #555;
  i { width: 30px; height: 30px; background: #f0b429; }
`;

const TextArea = styled.div`
  height: ${(p) => p.$h}px;
  padding: 26px 34px;
  background: #fff;
  line-height: 34px;
`;

const FormBoard = ({ x, y, title, second, h }) => (
  <Board $x={x} $y={y} $h={h}>
    <SideNav active="업무요청등록" admin={second} />
    <FormPage>
      <BTitle>{title}</BTitle>
      <Lead><b>필요한 업무 요청을 자세하게 남겨주세요.</b>아래의 항목에 맞게 입력해 주시기 바랍니다.</Lead>
      <FormGrid>
        <Field $full $mb={-8}><Input $h={40} $bare><Button $bg="#fff" $c="#333" $w={115} $h={40} $end>임시저장</Button></Input></Field>
        <Field $full><b>제목</b><Input>업무관리 시스템 화면 개선 및 프로그램 수정 요청의 건</Input></Field>
        <Field $mb={46}><b>요청자</b><Input>홍길동</Input></Field>
        {second ? <Field $mb={46}><b>업무 담당자</b><Input>작업자</Input></Field> : <span />}
        <Field $mb={48}><b>업무 카테고리</b><Input>디자인 요청</Input></Field>
        <Field $mb={48}><b>업무 작업자</b><Input>작업자</Input></Field>
        <Field $mb={46}><b>업무 분류</b><Input>신규 화면 디자인</Input></Field>
        <Field $mb={46}><b>업무 긴급</b><Input $bare>● 일반　　○ 긴급</Input></Field>
        <Field $mb={34}><b>참조 부서</b><Input>디자인팀</Input></Field>
        <Field $mb={34}><b>　</b><Input>부서원을 선택</Input></Field>
        <Field $full $mb={36}><Input $h={54}><span>개발팀 외 2명</span><span>홍길동 ×</span><span>김철수 ×</span></Input></Field>
        <Field $full $mb={24}><b>내용</b>
          <Tools>↶ ↷ <span>B</span><span>I</span><span>U</span><span>S</span><span>H</span><span>≡</span><span>≡</span><span>≡</span><span>▤</span><span>▤</span><span>A</span><span>▦</span><span>▣</span><i /></Tools>
          <TextArea $h={second ? 352 : 360}>- 업무관리 시스템 화면 개선 요청 사항을 확인 부탁드립니다.<br />- 상세 내용은 첨부파일 참고<br />- 프로그램 수정 및 화면 개선 일정을 공유해 주시면 감사하겠습니다.</TextArea>
        </Field>
        {second && <Field $mb={28}><b>시작일</b><Input>2024-05-01</Input></Field>}
        {second && <Field $mb={28}><b>종료예정일</b><Input>2024-05-31</Input></Field>}
      </FormGrid>
      <Buttons $mt={second ? 16 : 14}><Button $bg="#51545c">취소</Button><Button $bg={navy}>등록</Button><Gap $w={20} /></Buttons>
    </FormPage>
  </Board>
);

/* schedule */

const CalPage = styled.div`
  width: 2266px;
  margin-left: 32px;
  padding-top: 132px;
`;

const CalTop = styled.div`
  display: flex;
  justify-content: space-between;
  align-items: center;
  height: 44px;
  margin-top: 38px;
  padding: 0 14px;
  border-top: 6px solid #8a94b3;
  background: #fff;
`;

const Days = styled.div`
  display: grid;
  grid-template-columns: repeat(7, 1fr);
  place-items: center;
  height: 24px;
  background: #fff;
`;

const Week = styled.div`
  display: grid;
  grid-template-columns: repeat(7, 1fr);
  grid-template-rows: 30px 37px 12px 37px 1fr;
  height: 215px;
  border-bottom: 3px solid #e6e8ec;
  background: #fff;
`;

const Day = styled.div`
  grid-column: ${(p) => p.$n};
  grid-row: 1 / 6;
  padding: 4px 10px;
  border-right: 4px solid #eceef1;
  background: ${(p) => (p.$off ? "#e5e5e6" : "transparent")};
  text-align: right;
`;

const Ev = styled.div`
  grid-column: ${(p) => p.$c};
  grid-row: ${(p) => p.$r};
  display: flex;
  align-items: center;
  margin: 0 6px;
  padding-left: 12px;
  border-radius: 5px;
  background: ${(p) => p.$bg || "transparent"};
  color: ${(p) => p.$fg || "#fff"};
`;

const weeks = [
  { off: [1, 2], ev: [["3 / 8", 2, navy, "#fff", "업무관리 시스템 점검"]] },
  { off: [], ev: [["1 / 2", 2, navy, "#fff", ""], ["2 / 7", 2, navy, "#fff", "업무관리 시스템 화면 개선 요청의 건 작업"], ["2 / 4", 4, "", "#333", "업무관리 화면 개선 요청 일정"], ["5 / 7", 4, red, "#fff", "긴급 업무관리 화면 개선 요청의 건"]] },
  { off: [], ev: [["3 / 5", 2, "", "#333", "업무관리 화면 개선 요청 일정"], ["6 / 8", 2, "", "#333", "업무 화면 개선"]] },
  { off: [], ev: [["3 / 6", 2, navy, "#fff", "업무관리 시스템 화면 개선 요청의 건"], ["3 / 8", 4, "#dce3fb", "#333", "업무관리 시스템 점검"]] },
  { off: [5, 6, 7], ev: [["1 / 3", 2, navy, "#fff", ""], ["2 / 4", 4, "", "#333", "업무관리 화면 개선 요청"]] },
];

const ScheduleBoard = () => (
  <Board $x={1385} $y={915.4}>
    <SideNav active="나의 일정" admin />
    <CalPage>
      <BTitle>나의 일정</BTitle>
      <CalTop><span>오늘 이전 다음</span><b>2024년 5월</b><span>월간 주간 일간 목록</span></CalTop>
      <Days>{["월", "화", "수", "목", "금", "토", "일"].map((d) => <span key={d}>{d}</span>)}</Days>
      {weeks.map((w, i) => (
        <Week key={i}>
          {[1, 2, 3, 4, 5, 6, 7].map((n) => <Day key={n} $n={n} $off={w.off.includes(n)}>{((i * 7 + n + 27) % 31) + 1}</Day>)}
          {w.ev.map((e, j) => <Ev key={j} $c={e[0]} $r={e[1]} $bg={e[2]} $fg={e[3]}>{e[4]}</Ev>)}
        </Week>
      ))}
    </CalPage>
  </Board>
);

/* task detail */

const DetailPage = styled.div`
  width: 1716px;
  margin-left: 285px;
  padding-top: 100px;
`;

const Sheet = styled.div`
  height: 1200px;
  margin-top: 50px;
  padding: 30px 20px;
  background: #fff;
  font-size: 21px;
  h3 { display: flex; justify-content: space-between; align-items: center; height: 58px; margin: 10px 0 0; font-size: 32px; border-bottom: 4px solid #e5e7ee; }
  small { font-size: 19px; font-weight: 500; }
  p { margin: 14px 16px 28px; line-height: 33px; }
`;

const Meta = styled.div`
  margin-top: 14px;
  text-align: right;
`;

const DetailBoard = ({ x, y, dim }) => (
  <Board $x={x} $y={y}>
    <SideNav active="업무리스트" />
    <DetailPage>
      <BTitle $pl={40}>업무 리스트</BTitle>
      <Sheet>
        업무 상세
        <h3><span>[요청] 주요 화면 팝업 메뉴 개선 요청드립니다 관련 건</span><small>업무 요청일 2024-05-01　　업무완료일 2024-05-31</small></h3>
        <Meta>업무 요청자 홍길동　　업무 작업자 김철수 · 이영희</Meta>
        <p>1. 요청 화면의 개선 내용을 확인 부탁드립니다.<br />- 화면명 : 업무 리스트 화면<br />- 요청자 의견 및 개선사항 확인</p>
        <p>2. 상세 내용을 확인하고 작업 일정을 공유 부탁드립니다.<br />첨부된 파일의 화면별 요구사항을 참고하여 진행해 주세요.<br />업무 처리 현황을 확인해 주시기 바랍니다.<br />감사합니다.</p>
      </Sheet>
    </DetailPage>
    {dim && <Dimmer />}
    {dim && (
      <Dialog $x={1080} $y={623} $w={580} $h={267} $gap={30}>
        <b>업무 삭제</b><span>해당 업무를 삭제하시겠습니까?</span>
        <Buttons $mt={14}><Button $bg="#51545c" $h={56}>취소</Button><Button $bg={red} $h={56}>삭제하기</Button></Buttons>
      </Dialog>
    )}
  </Board>
);

/* org sheet */

const OrgBoard = styled(Board)`
  display: block;
  width: 1757px;
  height: 900px;
  padding: 14px 36px 0 16px;
  background: #fff;
`;

const OrgTitle = styled.div`
  height: 38px;
  border: 4px solid #888;
  font-size: 26px;
  font-weight: 700;
  line-height: 30px;
`;

const OrgArea = styled.div`
  height: 436px;
  margin-bottom: 34px;
  border: 4px solid #888;
  border-top: 0;
`;

const OrgRow = styled.div`
  display: flex;
  margin-bottom: ${(p) => p.$mb || 24}px;
  padding-left: ${(p) => p.$pl || 0}px;
`;

const OrgCell = styled.div`
  width: ${(p) => p.$w || 184}px;
  margin-right: ${(p) => p.$mr || 0}px;
  border: 3px solid #bbb;
  text-align: center;
  line-height: 31px;
  overflow: hidden;
  div:nth-child(-n + ${(p) => p.$y || 1}) { background: #fbe8b8; }
`;

const SheetRow = styled.div`
  display: grid;
  grid-template-columns: 52fr 101fr 50fr 54fr 120fr 101fr;
  height: 31px;
  background: ${(p) => (p.$head ? "#fbe8b8" : "#fff")};
  > span { padding-left: 6px; border: 2px solid #999; line-height: 28px; overflow: hidden; }
`;

const teams = ["기획팀", "디자인팀", "개발 1팀", "개발 2팀", "운영팀"];

const Org = () => (
  <OrgBoard as="article" $x={1709.4} $y={1255.3}>
    <OrgTitle>위더스 개발운영부 조직도(new group) 업무 현황</OrgTitle>
    <OrgArea>
      <OrgRow $pl={366} $mb={21}>
        <OrgCell $mr={466}><div>대표이사</div><div>홍길동 대표</div><div>new group.co</div></OrgCell>
        <OrgCell $w={332}><div>고문</div><div>개발운영 고문 이영희</div><div>new group.co</div></OrgCell>
      </OrgRow>
      <OrgRow $mb={26}>
        {teams.map((t) => <OrgCell key={t} $y={2}><div>{t} 본부</div><div>WORCS 담당</div><div>홍길동 팀장</div><div>new group</div></OrgCell>)}
      </OrgRow>
      <OrgRow>
        {teams.map((t) => <OrgCell key={t}><div>{t}</div><div>홍길동 대리</div><div>new group</div><div>김철수 사원</div><div>new group</div></OrgCell>)}
      </OrgRow>
    </OrgArea>
    <OrgTitle>WORCS maintenance 업무 현황</OrgTitle>
    <SheetRow $head>{["구분", "업무 내용", "담당자", "COMPANY", "메뉴명", "비고"].map((t) => <span key={t}>{t}</span>)}</SheetRow>
    {Array.from({ length: 8 }, (_, i) => (
      <SheetRow key={i}><span>{i === 2 ? "1. 업무 관리" : ""}</span><span>업무 요청 등록 {i + 1}</span><span>project</span><span>개발팀</span><span>{i % 2 ? "업무리스트, 대시보드 메뉴 관리" : "대시보드"}</span><span /></SheetRow>
    ))}
  </OrgBoard>
);

const Chip = styled.div`
  position: absolute;
  z-index: 3;
  left: ${(p) => p.$x - 362}px;
  top: ${(p) => p.$y}px;
  width: ${(p) => p.$w}px;
  height: ${(p) => p.$h}px;
  border-radius: 1px;
  background: ${(p) => p.$bg};
  font-size: 2.5px;
  line-height: 5px;
  text-align: center;
  color: #fff;
`;

const VScroll = styled.div`
  position: absolute;
  z-index: 4;
  left: 1823px;
  top: 373px;
  width: 9px;
  height: 508px;
  border: 1px solid #7d7d7d;
  border-radius: 5px;
`;

const HScroll = styled.div`
  position: absolute;
  z-index: 4;
  left: 3px;
  top: 1331px;
  width: 536px;
  height: 9px;
  border: 1px solid #8c8c8c;
  border-radius: 5px;
  background: rgba(30, 30, 30, 0.35);
`;

/* -------------------------------------------------------------- toolbar */

const Toolbar = styled.div`
  position: absolute;
  z-index: 5;
  left: 557px;
  top: 1254px;
  display: flex;
  align-items: center;
  width: 723px;
  height: 72px;
  padding-left: 12px;
  border-radius: 20px;
  background: #fff;
  box-shadow: 0 0 1px rgba(0, 0, 0, 0.5), 0 2px 8px rgba(0, 0, 0, 0.2);
`;

const Tool = styled.div`
  display: flex;
  align-items: center;
  justify-content: center;
  width: 48px;
  height: 48px;
  border-radius: 7px;
  background: ${(p) => (p.$on ? "#0d99ff" : "transparent")};
`;

const Caret = styled.div`
  display: flex;
  justify-content: center;
  width: ${(p) => p.$w}px;
  padding-right: ${(p) => p.$w - 26}px;
`;

const Divider = styled.div`
  width: 1px;
  height: 72px;
  margin: 0 11px 0 12.5px;
  background: ${line};
`;

const Modes = styled.div`
  display: flex;
  align-items: center;
  width: 138px;
  height: 48px;
  padding: 0 1px 0 3px;
  border-radius: 7px;
  background: #f5f5f5;
`;

const Mode = styled.div`
  display: flex;
  align-items: center;
  justify-content: center;
  width: ${(p) => (p.$on ? 42 : 46)}px;
  height: 42px;
  border-radius: 6px;
  ${(p) => p.$on && css`background: #fff; box-shadow: 0 0 1px rgba(0, 0, 0, 0.5), 0 1px 3px rgba(0, 0, 0, 0.25);`}
`;

const CanvasToolbar = () => (
  <Toolbar>
    <Tool $on><Icon w={26} h={26} c="#fff" sw={1.7}><path d="M1.700 3 9.800 23.800c.5 1.400 2.100 1.400 2.600 0l2.300-6.700c.2-.7.700-1.200 1.400-1.400l7.400-2.400c1.400-.5 1.500-2.200.2-2.700L3.600 1.400C2.300.9 1.200 1.800 1.700 3z" /></Icon></Tool>
    <Caret $w={38}><ChevronDown sw={1.6} /></Caret>
    <Tool><Icon w={24} h={24} sw={1.600}><path d="M5 0v24M19 0v24M0 5h24M0 19h24" /></Icon></Tool>
    <Caret $w={37}><ChevronDown sw={1.6} /></Caret>
    <Tool><Icon w={24} h={24} sw={1.600}><rect x=".8" y=".8" width="22.400" height="22.400" rx="2" /></Icon></Tool>
    <Caret $w={38}><ChevronDown sw={1.6} /></Caret>
    <Tool><Icon w={26} h={26} sw={1.600}><path d="m1 1 15.500 3.600c1 .3 1.700.8 2 1.800l2 6.600 4.500 4.200-8.200 8.200-4-4.500-6.600-1.800c-1-.3-1.600-1-1.800-2L1 1zM1 1l9.600 9.800" /><circle cx="13" cy="13" r="3.600" /></Icon></Tool>
    <Caret $w={35}><ChevronDown sw={1.6} /></Caret>
    <Tool><Icon w={22} h={22} sw={1.600}><path d="M1 5V1h20v4M11 1v20M7 21h8" /></Icon></Tool>
    <Gap $w={13} />
    <Tool><Icon w={24} h={24} sw={1.600}><path d="M12 .8a11.200 11.200 0 0 1 0 22.400H3.200A2.400 2.400 0 0 1 .8 20.800V12A11.200 11.200 0 0 1 12 .8z" /></Icon></Tool>
    <Caret $w={38}><ChevronDown sw={1.6} /></Caret>
    <Tool><Icon w={24} h={24} sw={1.600}><path d="M5.500.8 10.500 6 5.500 11.200.7 6zM18.500 13.500v10M13.500 18.500h10" /><circle cx="18.500" cy="6" r="4.600" /><rect x="1" y="14" width="9.200" height="9.200" rx="1.500" /></Icon></Tool>
    <Divider />
    <Modes>
      <Mode><Icon w={20} h={20} c="#7d7d7d"><path d="M.8 9 8.500 1.800c1.600-1.300 3.600.4 2.400 2.200L3.400 13c-1.200 1.800.6 3.400 2.200 2.200l8.400-8c1.700-1.400 3.700.5 2.400 2.300L11 16c-1.200 1.700.4 3.400 2 2.300l1.300-1.100c1.800-1.500 3.200-2 4.200-1" /></Icon></Mode>
      <Mode $on>
        <Icon w={20} h={20} c="#007be5" sw={1.600}>
          <path d="M16.500 5.500V2c0-.7-.5-1.200-1.200-1.200H2C1.300.8.8 1.300.8 2v15.300c0 .7.5 1.200 1.200 1.200h3.200c.5 0 .8-.3.8-.8V6.500c0-.6.4-1 1-1h9.500zM6 .8v2M11 .8v2M.8 7h2M.8 12h2M10 9.500l2.800 9 2.200-3.800 4.200-1.700z" />
        </Icon>
      </Mode>
      <Mode><Icon w={21} h={20} c="#7d7d7d"><path d="M5.500 4 .8 10l4.700 6M15.500 4l4.700 6-4.700 6M12.500 1l-4 18" /></Icon></Mode>
    </Modes>
  </Toolbar>
);

const labels = [
  [814.5, 24.3, "NEW WORCS_03_대시보드_업무 ..."], [1089, 24.3, "NEW WORCS_03_대시보드_업무 ..."],
  [1363, 24.3, "NEW WORCS_03_대시보드_업무..."], [1637.5, 24.3, "NEW WORCS_03_알람_업무챙김이"],
  [814.5, 191, "NEW WORCS_04_업무요청등록_..."], [1089, 191, "NEW WORCS_04_업무요청등록_..."],
  [814.5, 401.5, "NEW WORCS_05_업무리스트_01..."], [1089, 401.5, "NEW WORCS_05_업무리스트_01..."],
  [1366, 403, "NEW WORCS_05_업무리스트_01..."], [1640, 403, "NEW WORCS_05_업무리스트_01..."],
  [814.5, 571, "NEW WORCS_05_업무리스트_02..."], [1089, 571, "NEW WORCS_05_업무리스트_02..."],
  [1363, 571, "NEW WORCS_05_업무리스트_02..."], [1638, 571, "NEW WORCS_05_업무리스트_02..."],
  [814.5, 736, "NEW WORCS_05_업무리스트_03..."], [1089, 736, "NEW WORCS_05_업무리스트_03..."],
  [814.5, 906, "NEW WORCS_05_업무리스트_04..."], [1089, 906, "NEW WORCS_05_업무리스트_04..."],
  [1385.5, 906.5, "NEW WORCS_06_나의 일정"],
  [814.5, 1066.5, "NEW WORCS_05_업무리스트_05..."],
  [536, 1234, "NEW WORCS_04_업무 상세보기"], [814.5, 1237, "NEW WORCS_06_업무 상세보기_..."],
  [1089, 1237, "NEW WORCS_04_업무 상세보기"], [1364.5, 1234, "NEW WORCS_04_업무 수정"],
];

export default function App() {
  return (
    <>
      <GlobalStyle />
      <Shell>
        <Left />
        <Canvas>
          {labels.map(([x, y, t], i) => <NodeLabel key={i} $x={x} $y={y}>{t}</NodeLabel>)}
          <DashBoard x={814.5} kind={1} />
          <DashBoard x={1088.8} kind={2} />
          <DashBoard x={1363} kind={3} />
          <DashBoard x={1637.3} kind={4} />
          <FormBoard x={814.5} y={200.3} title="업무 요청 등록" h={1830} />
          <FormBoard x={1088.8} y={200.3} title="업무 요청 등록" second h={1900} />
          <ListBoard x={814.5} y={411} set="u1" tab={0} />
          <ListBoard x={1088.8} y={411} set="a1" tab={0} admin />
          <ListBoard x={1365} y={412.5} set="m1" tab={0} admin modal="review" />
          <ListBoard x={1639} y={412.5} set="b1" tab={0} admin />
          <ListBoard x={814.5} y={581} set="u2" tab={1} pink />
          <ListBoard x={1088.8} y={581} set="a2" tab={1} admin pink />
          <ListBoard x={1363} y={581} set="b2" tab={1} admin />
          <ListBoard x={1637.3} y={581} set="b2" tab={1} admin modal="assign" />
          <ListBoard x={814.5} y={745.5} set="u2" tab={2} />
          <ListBoard x={1088.8} y={745.5} set="a3" tab={2} admin />
          <ListBoard x={814.5} y={915.6} set="u2" tab={3} />
          <ListBoard x={1088.8} y={915.6} set="a4" tab={3} admin />
          <ScheduleBoard />
          <ListBoard x={814.5} y={1076.5} set="u2" tab={4} calm />
          <DetailBoard x={535.3} y={1243.7} dim />
          <DetailBoard x={814.5} y={1246.5} />
          <DetailBoard x={1088.8} y={1246.5} />
          <FormBoard x={1364.3} y={1243.5} title="업무 수정" second h={1900} />
          <Org />
          <Chip $x={752.3} $y={1194} $w={12.5} $h={5.5} $bg={red}>삭제</Chip>
          <Chip $x={882.5} $y={1233.5} $w={14} $h={6} $bg="#dcdcdc" />
          <VScroll />
          <HScroll />
          <CanvasToolbar />
        </Canvas>
        <Right />
      </Shell>
    </>
  );
}
